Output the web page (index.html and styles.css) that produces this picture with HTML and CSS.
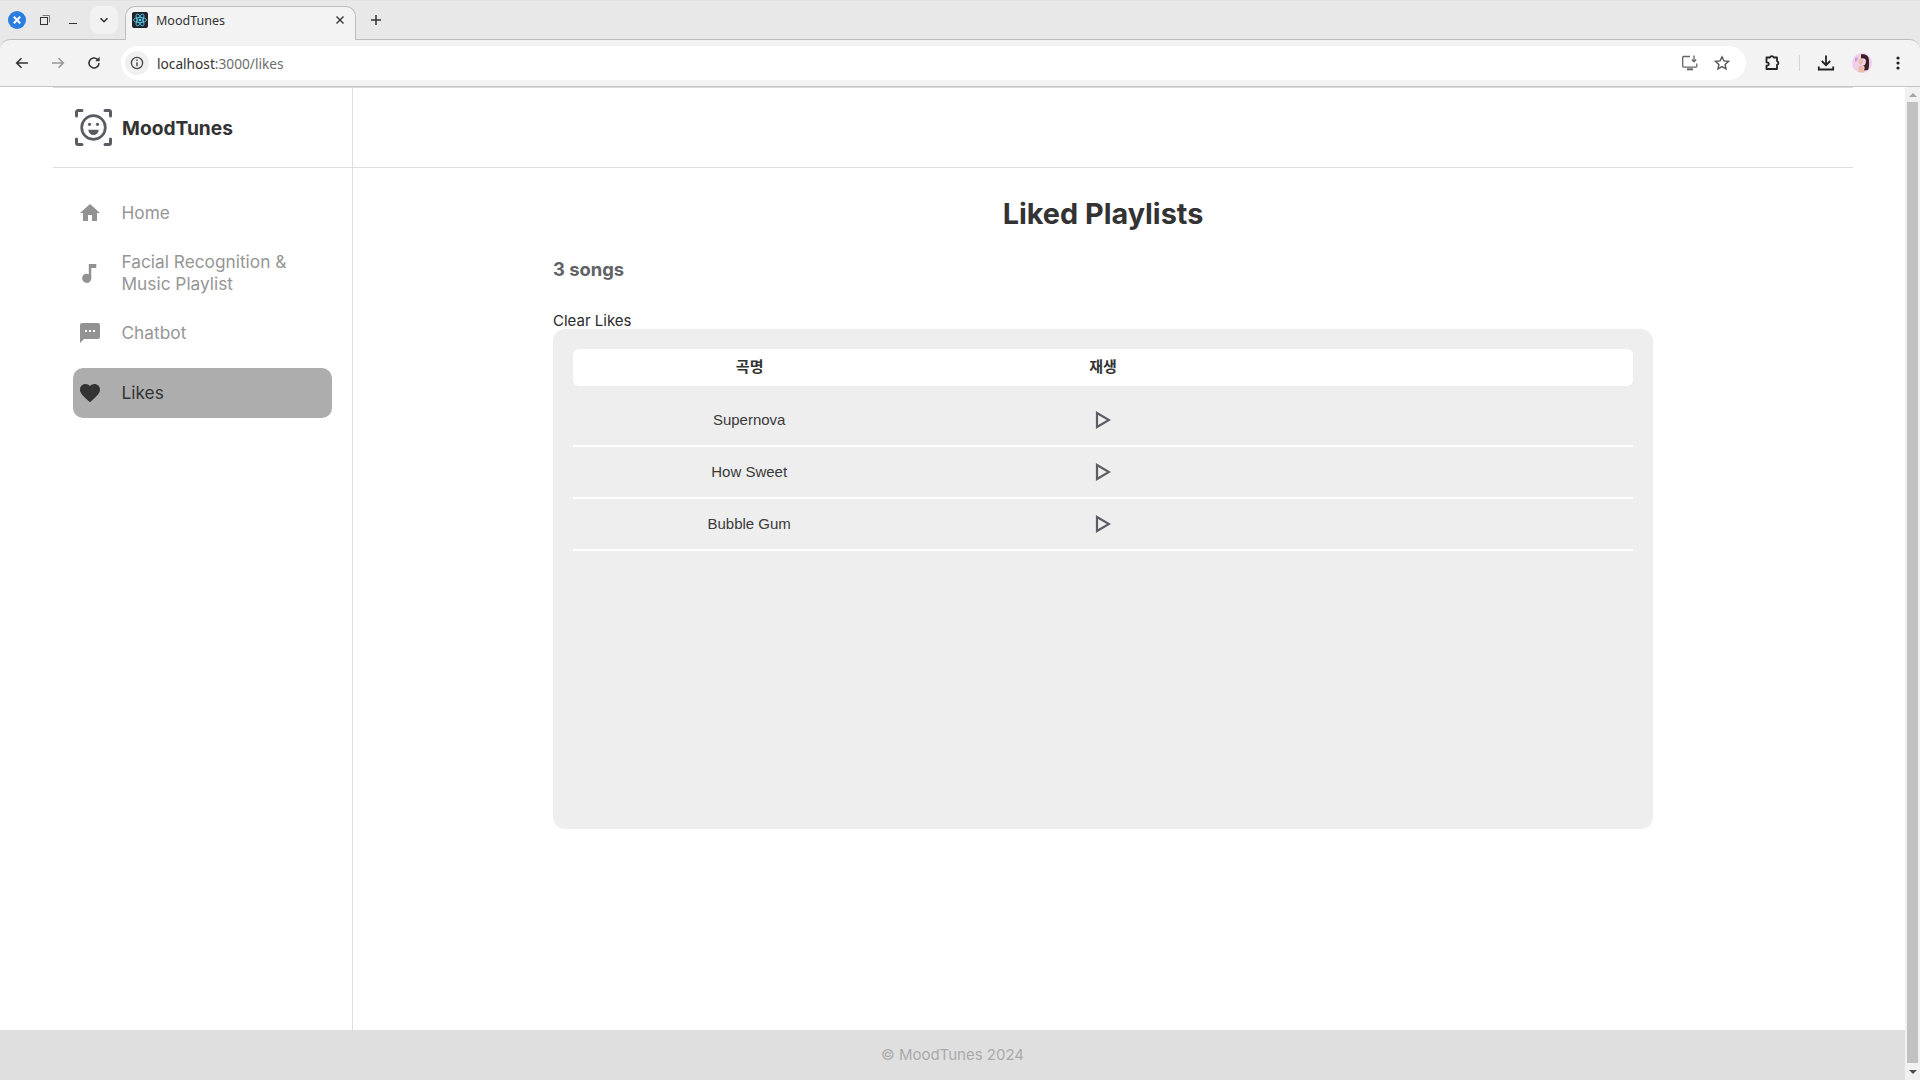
FILE: index.html
```html
<!DOCTYPE html>
<html lang="en">
<head>
<meta charset="utf-8">
<title>MoodTunes</title>
<link rel="stylesheet" href="styles.css">
</head>
<body>
<div class="browser">
  <div class="tabstrip">
    <div class="wincontrols">
      <span class="win-close"><svg width="18" height="18" viewBox="0 0 18 18"><circle cx="9" cy="9" r="9" fill="#2a7de1"/><path d="M5.8 5.8l6.400 6.400M12.200 5.800l-6.400 6.400" stroke="#fff" stroke-width="2"/></svg></span>
      <span class="win-btn"><svg width="12" height="12" viewBox="0 0 12 12"><path d="M3.500 1.500h7v7" fill="none" stroke="#777" stroke-width="1"/><rect x="1.500" y="3.500" width="7" height="7" fill="none" stroke="#333" stroke-width="1"/></svg></span>
      <span class="win-btn"><svg width="12" height="12" viewBox="0 0 12 12"><path d="M2 9.500h8" stroke="#333" stroke-width="1"/></svg></span>
      <span class="tab-search"><svg width="12" height="12" viewBox="0 0 12 12"><path d="M2.500 4.200L6 7.700l3.500-3.500" fill="none" stroke="#333" stroke-width="1.600"/></svg></span>
    </div>
    <div class="tab">
      <svg class="favicon" width="16" height="16" viewBox="0 0 16 16"><rect width="16" height="16" rx="2" fill="#20232a"/><g fill="none" stroke="#61dafb" stroke-width=".8"><ellipse cx="8" cy="8" rx="6.500" ry="2.600"/><ellipse cx="8" cy="8" rx="6.500" ry="2.600" transform="rotate(60 8 8)"/><ellipse cx="8" cy="8" rx="6.500" ry="2.600" transform="rotate(120 8 8)"/></g><circle cx="8" cy="8" r="1.300" fill="#61dafb"/></svg>
      <span class="tab-title">MoodTunes</span>
      <svg class="tab-x" width="10" height="10" viewBox="0 0 10 10"><path d="M1.500 1.500l7 7M8.500 1.500l-7 7" stroke="#333" stroke-width="1.400"/></svg>
    </div>
    <svg class="new-tab" width="12" height="12" viewBox="0 0 12 12"><path d="M6 1v10M1 6h10" stroke="#333" stroke-width="1.500"/></svg>
  </div>
  <div class="toolbar">
    <svg class="nav-ic" width="16" height="16" viewBox="0 0 16 16"><path d="M14 8H3M7.500 3.200L2.700 8l4.800 4.800" fill="none" stroke="#333" stroke-width="1.600"/></svg>
    <svg class="nav-ic" width="16" height="16" viewBox="0 0 16 16"><path d="M2 8h11M8.500 3.200L13.300 8l-4.800 4.800" fill="none" stroke="#999" stroke-width="1.600"/></svg>
    <svg class="nav-ic" width="16" height="16" viewBox="0 0 16 16"><path d="M13 8a5 5 0 1 1-1.600-3.700" fill="none" stroke="#333" stroke-width="1.600"/><path d="M13.600 1.800v4.400H9.200z" fill="#333"/></svg>
    <div class="omnibox">
      <span class="site-info"><svg width="14" height="14" viewBox="0 0 14 14"><circle cx="7" cy="7" r="5.600" fill="none" stroke="#444" stroke-width="1.300"/><path d="M7 6.200v4M7 3.600v1.400" stroke="#444" stroke-width="1.400"/></svg></span>
      <span class="url"><span class="url-host">localhost</span>:3000/likes</span>
      <span class="omni-right">
        <svg width="18" height="18" viewBox="0 0 18 18"><path d="M9 2.500H2.500a.8.8 0 0 0-.8.8v9a.8.8 0 0 0 .8.8h12.500a.8.8 0 0 0 .8-.8V9.500" fill="none" stroke="#666" stroke-width="1.300"/><path d="M6 15.300h6" stroke="#666" stroke-width="2"/><path d="M13 1.500v6M10.800 5.500l2.200 2.300 2.200-2.300" fill="none" stroke="#666" stroke-width="1.300"/></svg>
        <svg width="16" height="16" viewBox="0 0 16 16"><path d="M8 1.800l1.900 4.100 4.500.5-3.300 3 .9 4.400L8 11.600l-4 2.200.9-4.400-3.300-3 4.500-.5z" fill="none" stroke="#555" stroke-width="1.400"/></svg>
      </span>
    </div>
    <div class="toolbar-right">
      <svg width="18" height="18" viewBox="0 0 18 18"><path d="M2.500 3.500h3.500a2 2 0 0 1 3.800 0h3.200v3.600a2 2 0 0 1 0 3.800v4.100H2.500v-3.300h.6a1.700 1.700 0 0 0 0-3.400h-.6z" fill="none" stroke="#222" stroke-width="1.800" stroke-linejoin="round"/></svg>
      <span class="tool-sep"></span>
      <svg width="18" height="18" viewBox="0 0 18 18"><path d="M9 1.500v9.500M4.800 7L9 11.200 13.200 7" fill="none" stroke="#222" stroke-width="1.800"/><path d="M1.800 12.500v3h14.400v-3" fill="none" stroke="#222" stroke-width="1.800"/></svg>
      <svg class="avatar" width="20" height="20" viewBox="0 0 20 20"><circle cx="10" cy="10" r="10" fill="#f0cfe9"/><path d="M9 1.500c4-1 8 1 8 6 0 4 .5 6-1 9.500l-4 .5c1-3 1-4-1-5 2 0 3-2 3-5-1-2-3-3-5-1.500z" fill="#3a1f24"/><path d="M7 6c2-1.500 3-.5 4 .5 .5 3-.5 5-2.500 5.500-2-1-2-4-1.500-6z" fill="#e9bda8"/><path d="M7 13l4-.5 1 7-6-.5z" fill="#e9bda8"/><path d="M3 5l3-1-1 4-2 1z" fill="#c9a0d8"/></svg>
      <svg width="4" height="14" viewBox="0 0 4 14"><circle cx="2" cy="2" r="1.600" fill="#222"/><circle cx="2" cy="7" r="1.600" fill="#222"/><circle cx="2" cy="12" r="1.600" fill="#222"/></svg>
    </div>
  </div>
</div>
<div class="viewport">
  <div class="page">
    <div class="app">
      <aside class="sidebar">
        <div class="brand">
          <svg width="37" height="37" viewBox="0 0 37 37"><g fill="none" stroke="#595d63" stroke-width="3" stroke-linecap="round" stroke-linejoin="round"><path d="M1.500 7V3a1.500 1.500 0 0 1 1.500-1.500h4M30 1.500h4A1.500 1.500 0 0 1 35.500 3v4M35.500 30v4a1.500 1.500 0 0 1-1.500 1.500h-4M7 35.500H3A1.500 1.500 0 0 1 1.500 34v-4"/></g><circle cx="18.500" cy="18.500" r="11.800" fill="none" stroke="#595d63" stroke-width="2.700"/><circle cx="14.500" cy="15.300" r="1.600" fill="#595d63"/><circle cx="22.500" cy="15.300" r="1.600" fill="#595d63"/><path d="M13.300 20.800h10.400a5.200 5.200 0 0 1-10.400 0z" fill="#595d63"/></svg>
          <span class="brand-name">MoodTunes</span>
        </div>
        <nav class="nav">
          <a class="nav-item">
            <svg class="nav-icon" viewBox="0 0 24 24"><path d="M10 20v-6h4v6h5v-8h3L12 3 2 12h3v8z"/></svg>
            <span>Home</span>
          </a>
          <a class="nav-item">
            <svg class="nav-icon" viewBox="0 0 24 24"><path d="M10.800 3v10.200A4.600 4.600 0 1 0 13.300 17.500V7h5V3z"/></svg>
            <span>Facial Recognition &amp; Music Playlist</span>
          </a>
          <a class="nav-item">
            <svg class="nav-icon" viewBox="0 0 24 24"><path d="M20 2H4a2 2 0 0 0-2 2v18l4-4h14a2 2 0 0 0 2-2V4a2 2 0 0 0-2-2zM9 11H7V9h2zm4 0h-2V9h2zm4 0h-2V9h2z"/></svg>
            <span>Chatbot</span>
          </a>
          <a class="nav-item nav-active">
            <svg class="nav-icon" viewBox="0 0 24 24"><path d="M12 21.350l-1.450-1.320C5.400 15.360 2 12.280 2 8.500 2 5.420 4.420 3 7.500 3c1.740 0 3.410.81 4.500 2.090C13.090 3.810 14.760 3 16.500 3 19.580 3 22 5.420 22 8.500c0 3.780-3.400 6.860-8.550 11.540z"/></svg>
            <span>Likes</span>
          </a>
        </nav>
      </aside>
      <div class="content-col">
        <header class="topbar"></header>
        <main class="main">
          <h1 class="title">Liked Playlists</h1>
          <div class="container">
            <p class="count">3 songs</p>
            <div class="clear">Clear Likes</div>
            <div class="card">
              <div class="thead">
                <span class="cell">곡명</span>
                <span class="cell">재생</span>
                <span class="cell"></span>
              </div>
              <div class="trow">
                <span class="cell cell-name">Supernova</span>
                <span class="cell"><svg class="play" viewBox="0 0 16 18"><path d="M2 2l12 7-12 7z"/></svg></span>
                <span class="cell"></span>
              </div>
              <div class="trow">
                <span class="cell cell-name">How Sweet</span>
                <span class="cell"><svg class="play" viewBox="0 0 16 18"><path d="M2 2l12 7-12 7z"/></svg></span>
                <span class="cell"></span>
              </div>
              <div class="trow">
                <span class="cell cell-name">Bubble Gum</span>
                <span class="cell"><svg class="play" viewBox="0 0 16 18"><path d="M2 2l12 7-12 7z"/></svg></span>
                <span class="cell"></span>
              </div>
            </div>
          </div>
        </main>
      </div>
    </div>
    <footer class="footer">© MoodTunes 2024</footer>
  </div>
  <div class="scrollbar">
    <span class="sb-arrow-up"></span>
    <span class="sb-thumb"></span>
    <span class="sb-arrow-down"></span>
  </div>
</div>
</body>
</html>
```
FILE: styles.css
```css
* { box-sizing: border-box; }
html, body { margin: 0; height: 100%; overflow: hidden; }
body { display: flex; flex-direction: column; height: 1080px; background: #fff; font-family: Inter, "Noto Sans CJK KR", sans-serif; }

.browser { height: 87px; flex: none; background: #e8e8e8; display: flex; flex-direction: column; }
.tabstrip { height: 39px; display: flex; align-items: flex-start; padding: 5px 0 0 8px; border-top: 1px solid #e2e2e2; }
.wincontrols { display: flex; align-items: center; height: 28px; }
.win-close { width: 18px; height: 18px; display: block; margin-right: 13px; }
.win-close svg, .win-btn svg, .tab-search svg { display: block; }
.win-btn { width: 12px; margin-right: 16px; }
.tab-search { width: 28px; height: 28px; border-radius: 9px; background: #f2f2f2; display: flex; align-items: center; justify-content: center; margin-left: -5px; }
.tab { width: 231px; height: 34px; margin-left: 7px; background: #f3f3f3; border: 1px solid #bdbdbd; border-bottom: 0; border-radius: 10px 10px 0 0; display: flex; align-items: center; padding: 0 10px 7px 6px; position: relative; z-index: 1; margin-bottom: -1px; }
.favicon { flex: none; }
.tab-title { margin-left: 8px; font: 12.500px "Noto Sans", sans-serif; color: #333; flex: 1; }
.new-tab { margin: 8px 0 0 14px; }

.toolbar { height: 48px; background: #f3f3f3; border-top: 1px solid #bdbdbd; border-bottom: 1px solid #c4c4c4; border-radius: 10px 10px 0 0; display: flex; align-items: center; padding: 0 0 0 14px; }
.nav-ic { margin-right: 20px; flex: none; }
.nav-ic:nth-child(3) { margin-right: 19px; }
.omnibox { width: 1625px; height: 34px; background: #fff; border-radius: 17px; display: flex; align-items: center; padding: 0 16px 0 4px; }
.site-info { width: 24px; height: 24px; border-radius: 50%; background: #f0f0f0; display: flex; align-items: center; justify-content: center; }
.url { margin-left: 8px; font: 13.700px "Noto Sans", sans-serif; color: #6d6d6d; }
.url-host { color: #333; }
.omni-right { margin-left: auto; display: flex; align-items: center; gap: 15px; }
.toolbar-right { display: flex; align-items: center; margin-left: 18px; }
.tool-sep { width: 1px; height: 16px; background: #d4d4d4; margin: 0 17px; }
.avatar { margin: 0 24px 0 17px; }

.viewport { flex: 1; display: flex; min-height: 0; }
.page { flex: 1; display: flex; flex-direction: column; min-width: 0; }
.app { flex: 1; display: flex; padding: 0 52px 0 53px; min-height: 0; }
.sidebar { width: 300px; flex: none; border-right: 1px solid #dedede; border-top: 1px solid #dcdcdc; }
.brand { height: 80px; border-bottom: 1px solid #dedede; display: flex; align-items: center; padding: 0 0 0 22px; gap: 10px; }
.brand-name { font-size: 19.200px; font-weight: 700; color: #333; }
.nav { padding: 20px 20px; display: flex; flex-direction: column; gap: 10px; }
.nav-item { display: flex; align-items: center; gap: 19.500px; padding: 0 5px; height: 50px; font-size: 17.300px; line-height: 22px; color: #969696; font-weight: 400; }
.nav-icon { width: 24px; height: 24px; fill: #929292; flex: none; }
.nav-active { background: #adadad; border-radius: 10px; color: #333; }
.nav-active .nav-icon { fill: #333; }

.content-col { flex: 1; display: flex; flex-direction: column; min-width: 0; border-top: 1px solid #dcdcdc; }
.topbar { height: 80px; border-bottom: 1px solid #dedede; flex: none; }
.main { flex: 1; display: flex; flex-direction: column; align-items: center; padding-top: 28px; }
.title { margin: 0; font-size: 28.800px; line-height: 36px; font-weight: 700; color: #333; }
.container { width: 1100px; margin-top: 23px; }
.count { margin: 0; font-size: 18.400px; line-height: 28px; font-weight: 700; color: #5f6266; }
.clear { margin-top: 29px; font-size: 15px; line-height: 17px; color: #2a2a2a; }
.card { height: 500px; background: #eeeeee; border-radius: 12px; padding: 20px; }
.thead { display: grid; grid-template-columns: repeat(3, 1fr); height: 37px; padding-bottom: 5px; background: #fff; border-radius: 6px; align-items: center; text-align: center; font: 700 15px "Liberation Sans", "Noto Sans CJK KR", sans-serif; color: #333; margin-bottom: 9px; }
.trow { display: grid; grid-template-columns: repeat(3, 1fr); height: 52px; align-items: center; text-align: center; border-bottom: 2px solid #fff; font: 15px "Liberation Sans", sans-serif; color: #3a3a3a; }
.cell { display: flex; justify-content: center; align-items: center; }
.cell-name { padding-bottom: 2px; padding-right: 1px; }
.play { width: 16px; height: 18px; fill: none; stroke: #5a5e64; stroke-width: 2.200; }

.footer { height: 50px; flex: none; padding-bottom: 2px; background: #dfdfdf; display: flex; align-items: center; justify-content: center; font-size: 15px; color: #aaaaaa; }

.scrollbar { width: 15px; flex: none; background: #f1f1f1; display: flex; flex-direction: column; align-items: center; }
.sb-arrow-up { width: 0; height: 0; margin-top: 6px; border: 4px solid transparent; border-top: 0; border-bottom: 4px solid #a3a3a3; }
.sb-thumb { width: 11px; flex: 1; background: #c1c1c1; margin: 5px 0 7px; }
.sb-arrow-down { width: 0; height: 0; margin-bottom: 6px; border: 4px solid transparent; border-bottom: 0; border-top: 4px solid #505050; }
```
